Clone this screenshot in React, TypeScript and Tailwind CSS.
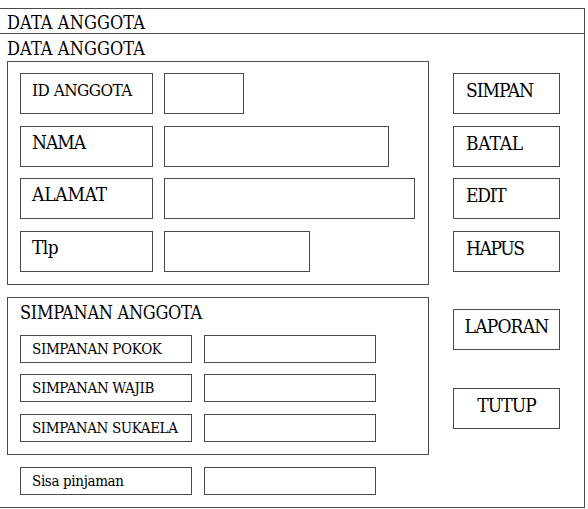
import React from "react";

const serif = "font-['DejaVu_Serif',serif] font-stretch-condensed text-black";

function Field({ label, className, textClass }: { label: string; className: string; textClass: string }) {
  return (
    <div className={`border border-[#4a4a4a] ${className}`}>
      <div className={`${serif} leading-none whitespace-nowrap ${textClass}`}>{label}</div>
    </div>
  );
}

export default function App() {
  return (
    <div className="w-[588px] h-[509px] bg-white overflow-hidden">
      <div className="mt-2 w-[585px] h-[500px] border-t border-r border-b border-[#4a4a4a] flex flex-col">
        {/* window title */}
        <div className="h-[25px] border-b border-[#4a4a4a] pl-[7px] pt-[5px]">
          <div className={`${serif} leading-none text-[18px] tracking-[0.1px]`}>DATA ANGGOTA</div>
        </div>

        <div className="flex pl-[7px]">
          {/* form column */}
          <div className="w-[422px] flex flex-col">
            <div className="h-[27px] pt-[6px]">
              <div className={`${serif} leading-none text-[18px] tracking-[0.1px]`}>DATA ANGGOTA</div>
            </div>

            <div className="h-[224px] border border-[#4a4a4a] pt-[11px] pl-[12px] flex flex-col">
              <div className="flex gap-[11px]">
                <Field label="ID ANGGOTA" className="w-[133px] h-[41px] pl-[11px] pt-[8px]" textClass="text-[17px] tracking-[-0.5px]" />
                <div className="w-[80px] h-[41px] border border-[#4a4a4a]" />
              </div>
              <div className="flex gap-[11px] mt-[12px]">
                <Field label="NAMA" className="w-[133px] h-[41px] pl-[11px] pt-[6px]" textClass="text-[19px] tracking-[-1px]" />
                <div className="w-[225px] h-[41px] border border-[#4a4a4a]" />
              </div>
              <div className="flex gap-[11px] mt-[11px]">
                <Field label="ALAMAT" className="w-[133px] h-[41px] pl-[11px] pt-[6px]" textClass="text-[19px] tracking-[-0.2px]" />
                <div className="w-[251px] h-[41px] border border-[#4a4a4a]" />
              </div>
              <div className="flex gap-[11px] mt-[12px]">
                <Field label="Tlp" className="w-[133px] h-[41px] pl-[11px] pt-[6px]" textClass="text-[19px] tracking-[-0.6px]" />
                <div className="w-[146px] h-[41px] border border-[#4a4a4a]" />
              </div>
            </div>

            <div className="mt-[12px] h-[158px] border border-[#4a4a4a] pl-[12px] flex flex-col">
              <div className="h-[37px] pt-[6px]">
                <div className={`${serif} leading-none text-[18px] tracking-[-0.3px]`}>SIMPANAN ANGGOTA</div>
              </div>
              <div className="flex gap-[12px]">
                <Field label="SIMPANAN POKOK" className="w-[172px] h-[28px] pl-[11px] pt-[6px]" textClass="text-[15px] tracking-[-0.35px]" />
                <div className="w-[172px] h-[28px] border border-[#4a4a4a]" />
              </div>
              <div className="flex gap-[12px] mt-[11px]">
                <Field label="SIMPANAN WAJIB" className="w-[172px] h-[28px] pl-[11px] pt-[6px]" textClass="text-[15px] tracking-[-0.35px]" />
                <div className="w-[172px] h-[28px] border border-[#4a4a4a]" />
              </div>
              <div className="flex gap-[12px] mt-[12px]">
                <Field label="SIMPANAN SUKAELA" className="w-[172px] h-[28px] pl-[11px] pt-[6px]" textClass="text-[15px] tracking-[-0.4px]" />
                <div className="w-[172px] h-[28px] border border-[#4a4a4a]" />
              </div>
            </div>

            <div className="mt-[12px] pl-[13px] flex gap-[12px]">
              <Field label="Sisa pinjaman" className="w-[172px] h-[28px] pl-[11px] pt-[6px]" textClass="text-[15px] tracking-[-0.35px]" />
              <div className="w-[172px] h-[28px] border border-[#4a4a4a]" />
            </div>
          </div>

          {/* action buttons */}
          <div className="ml-[24px] pt-[39px] flex flex-col">
            <Field label="SIMPAN" className="w-[107px] h-[41px] pl-[12px] pt-[7px]" textClass="text-[19px] tracking-[-1px]" />
            <Field label="BATAL" className="mt-[12px] w-[107px] h-[41px] pl-[12px] pt-[7px]" textClass="text-[19px] tracking-[-0.2px]" />
            <Field label="EDIT" className="mt-[11px] w-[107px] h-[41px] pl-[12px] pt-[7px]" textClass="text-[19px] tracking-[-1.2px]" />
            <Field label="HAPUS" className="mt-[12px] w-[107px] h-[41px] pl-[12px] pt-[7px]" textClass="text-[19px] tracking-[-1.4px]" />
            <Field label="LAPORAN" className="mt-[37px] w-[107px] h-[41px] pt-[7px] text-center" textClass="text-[19px] tracking-[-0.8px]" />
            <Field label="TUTUP" className="mt-[38px] w-[107px] h-[41px] pt-[7px] text-center" textClass="text-[19px] tracking-[-0.9px]" />
          </div>
        </div>
      </div>
    </div>
  );
}
